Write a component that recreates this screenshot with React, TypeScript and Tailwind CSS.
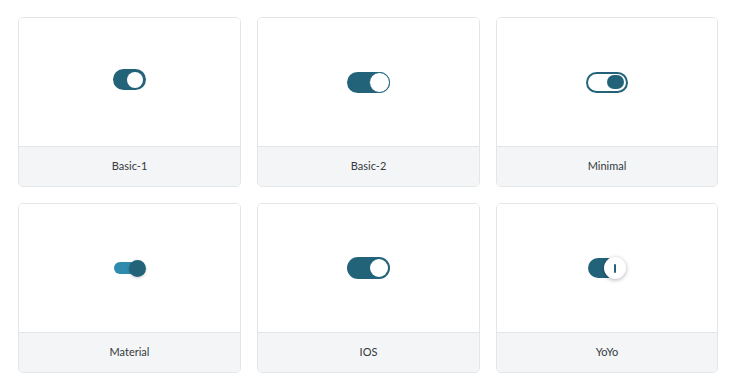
import React from "react";

const TEAL = "bg-[#23637a]";

function Basic1() {
  return (
    <div className={`w-[33px] h-[21px] rounded-full ${TEAL} flex items-center justify-end pr-[3px] mb-[5px]`}>
      <div className="w-[16px] h-[16px] rounded-full bg-white" />
    </div>
  );
}

function Basic2() {
  return (
    <div className={`w-[43px] h-[21px] rounded-full ${TEAL} flex items-center justify-end`}>
      <div className="w-[21px] h-[21px] rounded-full bg-white border border-[#23637a]" />
    </div>
  );
}

function Minimal() {
  return (
    <div className="w-[42px] h-[21px] rounded-full border-2 border-[#23637a] bg-white flex items-center justify-end pr-[2px]">
      <div className={`w-[17px] h-[14px] rounded-full ${TEAL}`} />
    </div>
  );
}

function Material() {
  return (
    <div className="relative w-[32px] h-[17px] flex items-center">
      <div className="w-[26px] h-[12px] rounded-full bg-[#2f8bad]" />
      <div className={`absolute right-0 top-0 w-[17px] h-[17px] rounded-full ${TEAL} shadow-[0_1px_3px_rgba(0,0,0,0.2)]`} />
    </div>
  );
}

function IOS() {
  return (
    <div className={`w-[43px] h-[22px] rounded-full ${TEAL} flex items-center justify-end pr-[2px]`}>
      <div className="w-[18px] h-[18px] rounded-full bg-white" />
    </div>
  );
}

function YoYo() {
  return (
    <div className="relative w-[38px] h-[22px] flex items-center">
      <div className={`w-[30px] h-[20px] rounded-full ${TEAL}`} />
      <div className="absolute right-0 top-0 w-[22px] h-[22px] rounded-full bg-white shadow-[0_1px_4px_rgba(0,0,0,0.3)] flex items-center justify-center">
        <div className="w-[2px] h-[9px] bg-[#23637a] rounded-sm" />
      </div>
    </div>
  );
}

const items: { label: string; C: () => React.ReactElement }[] = [
  { label: "Basic-1", C: Basic1 },
  { label: "Basic-2", C: Basic2 },
  { label: "Minimal", C: Minimal },
  { label: "Material", C: Material },
  { label: "IOS", C: IOS },
  { label: "YoYo", C: YoYo },
];

export default function App() {
  return (
    <div className="w-[733px] h-[389px] bg-white pt-[17px] pl-[18px]" style={{ fontFamily: "Lato, 'Noto Sans', sans-serif" }}>
      <div className="grid grid-cols-[223px_223px_222px] gap-x-[16px] gap-y-[16px] w-[699px]">
        {items.map(({ label, C }) => (
          <div key={label} className="h-[170px] rounded-[5px] border border-[#e3e6e9] overflow-hidden flex flex-col">
            <div className="h-[128px] flex items-center justify-center bg-white">
              <C />
            </div>
            <div className="flex-1 border-t border-[#e3e6e9] bg-[#f3f5f6] flex items-center justify-center text-[11px] text-[#333a40]">
              {label}
            </div>
          </div>
        ))}
      </div>
    </div>
  );
}
